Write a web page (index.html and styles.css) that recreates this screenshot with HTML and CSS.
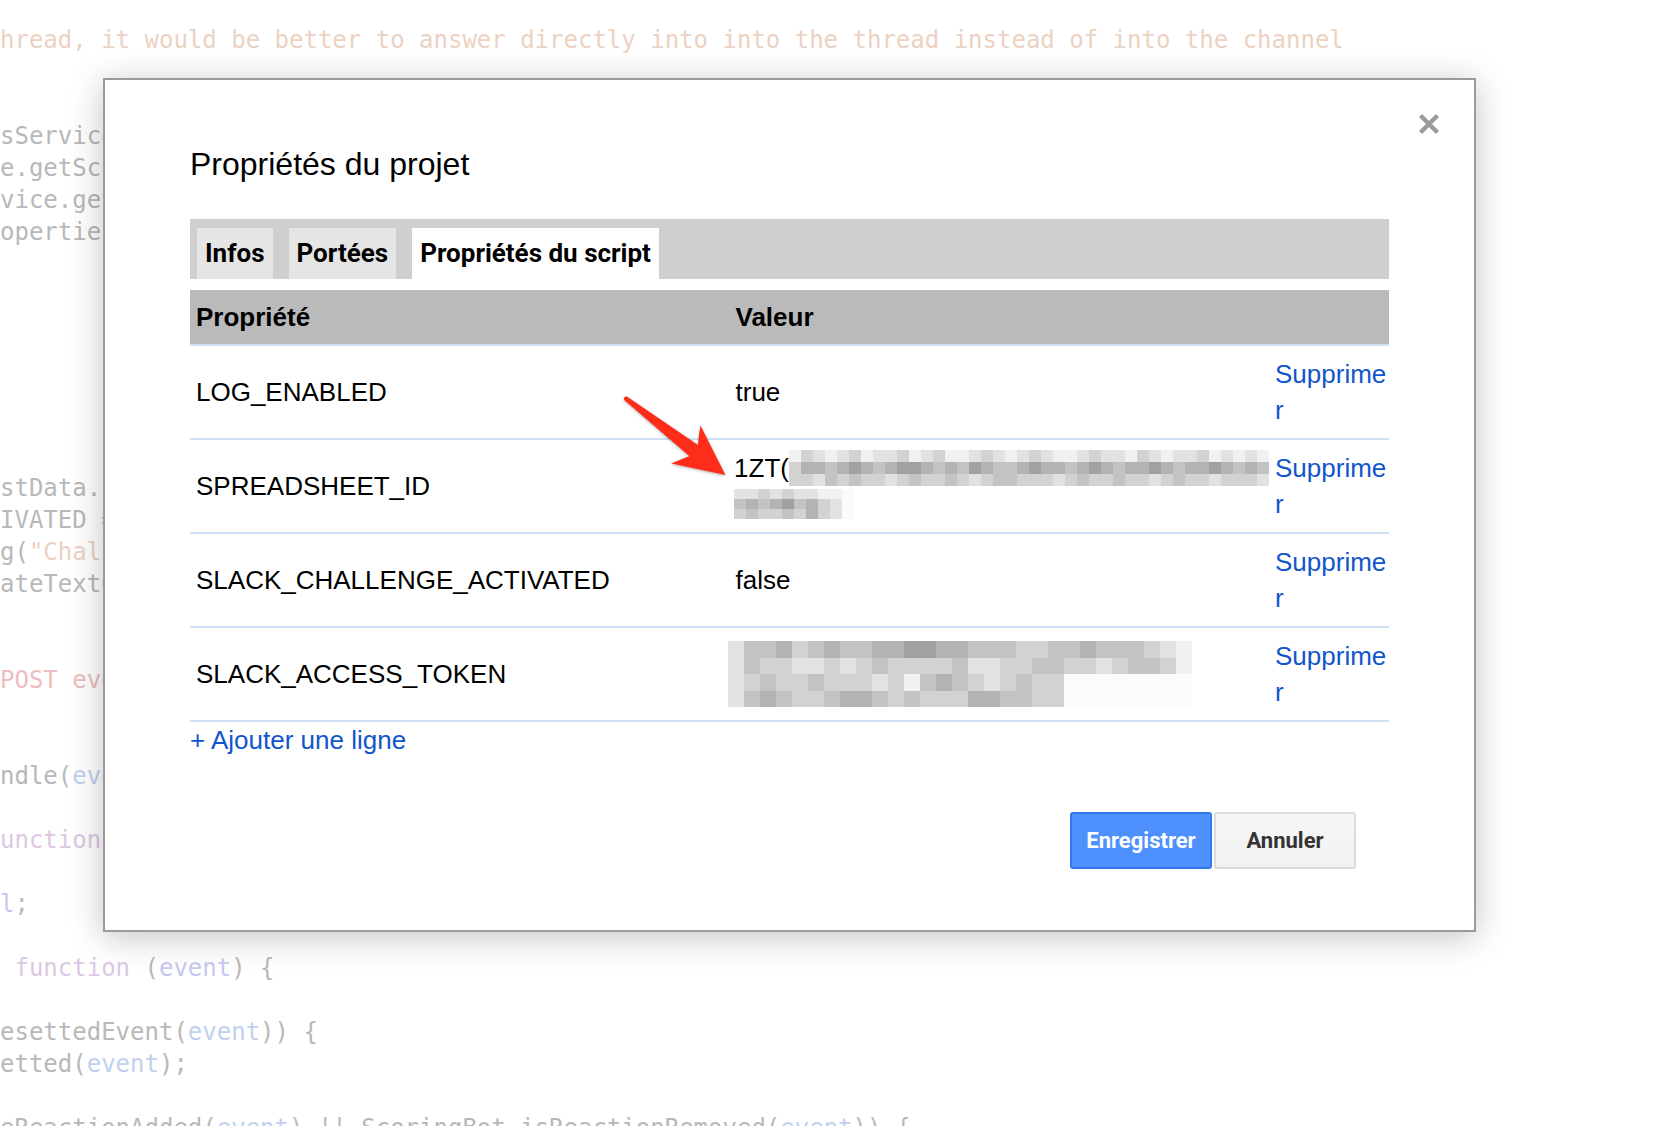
FILE: index.html
```html
<!DOCTYPE html>
<html lang="fr">
<head>
<meta charset="utf-8">
<title>Propriétés du projet</title>
<link rel="stylesheet" href="styles.css">
</head>
<body>
<div class="code">
<div class="ln pe">hread, it would be better to answer directly into into the thread instead of into the channel</div>
<div class="ln"></div>
<div class="ln"></div>
<div class="ln">sServices.getScriptProperties();</div>
<div class="ln">e.getScriptProperties();</div>
<div class="ln">vice.getProperty("LOG");</div>
<div class="ln">operties();</div>
<div class="ln"></div>
<div class="ln"></div>
<div class="ln"></div>
<div class="ln"></div>
<div class="ln"></div>
<div class="ln"></div>
<div class="ln"></div>
<div class="ln">stData.challenge;</div>
<div class="ln">IVATED = true;</div>
<div class="ln">g(<span class="pe">"Challenge"</span>);</div>
<div class="ln">ateTextOutput(challenge);</div>
<div class="ln"></div>
<div class="ln"></div>
<div class="ln"><span class="rd">POST event</span></div>
<div class="ln"></div>
<div class="ln"></div>
<div class="ln">ndle(<span class="bl">event</span>);</div>
<div class="ln"></div>
<div class="ln"><span class="kw">unction</span> (event) {</div>
<div class="ln"></div>
<div class="ln"><span class="vi">l</span>;</div>
<div class="ln"></div>
<div class="ln"> <span class="kw">function</span> (<span class="vi">event</span>) {</div>
<div class="ln"></div>
<div class="ln">esettedEvent(<span class="bl">event</span>)) {</div>
<div class="ln">etted(<span class="bl">event</span>);</div>
<div class="ln"></div>
<div class="ln">eReactionAdded(<span class="bl">event</span>) || ScoringBot.isReactionRemoved(<span class="bl">event</span>)) {</div>
</div>

<div class="dialog">
  <button class="close" aria-label="Fermer">
    <svg viewBox="0 0 22 22" width="22" height="22"><path d="M2.5 2.5 L19.5 19.5 M19.5 2.5 L2.5 19.5" stroke="#9c9c9c" stroke-width="4.5" fill="none"/></svg>
  </button>
  <h1 class="title">Propriétés du projet</h1>
  <div class="tabbar">
    <div class="tab">Infos</div>
    <div class="tab">Portées</div>
    <div class="tab active">Propriétés du script</div>
  </div>
  <div class="props">
    <div class="row head">
      <div class="cell">Propriété</div>
      <div class="cell">Valeur</div>
      <div class="cell"></div>
    </div>
    <div class="row">
      <div class="cell">LOG_ENABLED</div>
      <div class="cell">true</div>
      <div class="del"><a href="#">Supprimer</a></div>
    </div>
    <div class="row">
      <div class="cell">SPREADSHEET_ID</div>
      <div class="cell val">
        <div class="vline">1ZT(<span class="mz m1"><i class=a></i><i class=c></i><i class=b></i><i class=a></i><i class=b></i><i class=c></i><i class=a></i><i class=b></i><i class=b></i><i class=c></i><i class=a></i><i class=b></i><i class=c></i><i class=a></i><i class=a></i><i class=b></i><i class=c></i><i class=b></i><i class=a></i><i class=b></i><i class=c></i><i class=b></i><i class=a></i><i class=a></i><i class=b></i><i class=c></i><i class=b></i><i class=b></i><i class=a></i><i class=c></i><i class=b></i><i class=a></i><i class=b></i><i class=b></i><i class=c></i><i class=a></i><i class=b></i><i class=a></i><i class=b></i><i class=a></i><i class=c></i><i class=e></i><i class=e></i><i class=d></i><i class=e></i><i class=f></i><i class=e></i><i class=d></i><i class=e></i><i class=f></i><i class=f></i><i class=e></i><i class=d></i><i class=e></i><i class=d></i><i class=f></i><i class=e></i><i class=d></i><i class=d></i><i class=e></i><i class=f></i><i class=e></i><i class=e></i><i class=d></i><i class=e></i><i class=f></i><i class=e></i><i class=d></i><i class=e></i><i class=e></i><i class=f></i><i class=e></i><i class=d></i><i class=e></i><i class=e></i><i class=f></i><i class=e></i><i class=d></i><i class=e></i><i class=d></i><i class=c></i><i class=c></i><i class=b></i><i class=d></i><i class=c></i><i class=d></i><i class=c></i><i class=c></i><i class=b></i><i class=c></i><i class=d></i><i class=c></i><i class=c></i><i class=d></i><i class=c></i><i class=b></i><i class=c></i><i class=d></i><i class=d></i><i class=c></i><i class=c></i><i class=c></i><i class=b></i><i class=c></i><i class=d></i><i class=c></i><i class=c></i><i class=d></i><i class=c></i><i class=c></i><i class=b></i><i class=c></i><i class=d></i><i class=c></i><i class=c></i><i class=b></i><i class=c></i><i class=c></i><i class=c></i><i class=b></i></span></div>
        <div class="vline"><span class="mz m2"><i class=b></i><i class=b></i><i class=c></i><i class=b></i><i class=c></i><i class=b></i><i class=b></i><i class=a></i><i class=a></i><i class=w></i><i class=d></i><i class=e></i><i class=d></i><i class=e></i><i class=f></i><i class=d></i><i class=e></i><i class=c></i><i class=b></i><i class=w></i><i class=c></i><i class=d></i><i class=c></i><i class=c></i><i class=d></i><i class=c></i><i class=e></i><i class=c></i><i class=b></i><i class=w></i></span></div>
      </div>
      <div class="del"><a href="#">Supprimer</a></div>
    </div>
    <div class="row">
      <div class="cell">SLACK_CHALLENGE_ACTIVATED</div>
      <div class="cell">false</div>
      <div class="del"><a href="#">Supprimer</a></div>
    </div>
    <div class="row">
      <div class="cell">SLACK_ACCESS_TOKEN</div>
      <div class="cell"><span class="mz m3"><i class=b></i><i class=d></i><i class=d></i><i class=e></i><i class=c></i><i class=d></i><i class=e></i><i class=d></i><i class=d></i><i class=e></i><i class=e></i><i class=f></i><i class=f></i><i class=e></i><i class=e></i><i class=d></i><i class=d></i><i class=d></i><i class=c></i><i class=c></i><i class=d></i><i class=d></i><i class=e></i><i class=d></i><i class=d></i><i class=d></i><i class=c></i><i class=b></i><i class=a></i><i class=b></i><i class=d></i><i class=c></i><i class=c></i><i class=b></i><i class=b></i><i class=c></i><i class=b></i><i class=c></i><i class=d></i><i class=c></i><i class=c></i><i class=c></i><i class=c></i><i class=d></i><i class=b></i><i class=b></i><i class=c></i><i class=c></i><i class=d></i><i class=d></i><i class=c></i><i class=c></i><i class=b></i><i class=c></i><i class=d></i><i class=d></i><i class=c></i><i class=a></i><i class=b></i><i class=c></i><i class=d></i><i class=c></i><i class=c></i><i class=d></i><i class=c></i><i class=c></i><i class=c></i><i class=b></i><i class=c></i><i class=a></i><i class=d></i><i class=e></i><i class=d></i><i class=c></i><i class=b></i><i class=c></i><i class=d></i><i class=c></i><i class=c></i><i class=w></i><i class=w></i><i class=w></i><i class=w></i><i class=w></i><i class=w></i><i class=w></i><i class=w></i><i class=b></i><i class=d></i><i class=e></i><i class=d></i><i class=c></i><i class=c></i><i class=d></i><i class=e></i><i class=e></i><i class=d></i><i class=c></i><i class=d></i><i class=c></i><i class=c></i><i class=c></i><i class=e></i><i class=e></i><i class=d></i><i class=d></i><i class=c></i><i class=c></i><i class=w></i><i class=w></i><i class=w></i><i class=w></i><i class=w></i><i class=w></i><i class=w></i><i class=w></i></span></div>
      <div class="del"><a href="#">Supprimer</a></div>
    </div>
  </div>
  <a class="add" href="#">+ Ajouter une ligne</a>
  <div class="actions">
    <button class="btn primary">Enregistrer</button>
    <button class="btn">Annuler</button>
  </div>
</div>

<svg class="arrow" viewBox="0 0 140 120" width="140" height="120" aria-hidden="true">
  <g transform="translate(125.5 105) rotate(37.5)">
    <path d="M0 0 L-50 24 Q-44 13 -40 7 L-126 2.2 Q-129 0 -126 -2.2 L-40 -7 Q-44 -13 -50 -24 Z" fill="#fe2d1a"/>
  </g>
</svg>
</body>
</html>
```

FILE: styles.css
```css
* { box-sizing: border-box; }

html, body {
  margin: 0;
  height: 100%;
}

body {
  position: relative;
  overflow: hidden;
  background: #fff;
  font-family: "Liberation Sans", Arial, sans-serif;
  color: #000;
}

/* background code editor */
.code {
  padding-top: 24px;
  font-family: "DejaVu Sans Mono", "Liberation Mono", monospace;
  font-size: 24px;
  line-height: 32px;
  color: #b8b8b8;
}
.ln {
  height: 32px;
  white-space: pre;
}
.pe { color: #ebd2c2; }
.rd { color: #edbdbd; }
.kw { color: #dec6e5; }
.bl { color: #bfd1ee; }
.vi { color: #c6c8f2; }

/* dialog */
.dialog {
  position: absolute;
  left: 103px;
  top: 78px;
  width: 1373px;
  height: 854px;
  border: 2px solid #9b9b9b;
  background: #fff;
  box-shadow: 0 5px 32px rgba(0, 0, 0, 0.24);
  padding: 64px 85px 0;
  display: flex;
  flex-direction: column;
}

.close {
  position: absolute;
  top: 33px;
  right: 34px;
  width: 22px;
  height: 22px;
  padding: 0;
  border: 0;
  background: none;
  display: block;
}
.close svg { display: block; }

.title {
  margin: 0;
  font-size: 32px;
  line-height: 40px;
  font-weight: 400;
  color: #000;
}

.tabbar {
  margin-top: 35px;
  height: 60px;
  background: #cfcfcf;
  padding: 9px 7px 0;
  display: flex;
  gap: 16px;
}
.tab {
  height: 51px;
  line-height: 51px;
  padding: 0 8px;
  background: #e5e5e5;
  font-family: Roboto, "Liberation Sans", sans-serif;
  font-weight: 700;
  font-size: 26px;
  color: #000;
}
.tab.active { background: #fff; }

.props {
  margin-top: 11px;
  font-size: 26px;
}
.row {
  display: grid;
  grid-template-columns: 1fr 1fr 120px;
  border-bottom: 2px solid #cfe0f2;
}
.head {
  height: 56px;
  background: #bababa;
  font-weight: 700;
}
.cell {
  padding: 10px 0 10px 6px;
  line-height: 36px;
  display: flex;
  align-items: center;
}
.head .cell { padding: 0 0 0 6px; }
.del {
  padding: 10px 0 10px 6px;
  line-height: 36px;
  word-break: break-all;
}
.del a, .add {
  color: #1155cc;
  text-decoration: none;
}

.val {
  flex-direction: column;
  align-items: flex-start;
  justify-content: center;
}
.vline {
  display: flex;
  align-items: center;
  height: 36px;
}

/* pixelated redaction */
.mz { display: grid; }
.m1 { grid-template-columns: repeat(40, 12px); grid-auto-rows: 12px; }
.m2 { grid-template-columns: repeat(10, 12px); grid-auto-rows: 10px; }
.m3 { grid-template-columns: repeat(29, 16px); grid-auto-rows: 16.5px; margin-left: -8px; }
.mz i { display: block; }
.mz .a { background: #f1f1f1; }
.mz .b { background: #e2e2e2; }
.mz .c { background: #d2d2d2; }
.mz .d { background: #c3c3c3; }
.mz .e { background: #b3b3b3; }
.mz .f { background: #a1a1a1; }
.mz .w { background: #fbfbfb; }

.add {
  align-self: flex-start;
  font-size: 26px;
  line-height: 36px;
}

.actions {
  margin-top: 54px;
  display: flex;
  justify-content: flex-end;
  gap: 2px;
  padding-right: 33px;
}
.btn {
  min-width: 142px;
  height: 57px;
  padding: 0 14px;
  border: 2px solid #dcdcdc;
  border-radius: 3px;
  background: linear-gradient(#f6f6f6, #f1f1f1);
  font-family: Roboto, "Liberation Sans", sans-serif;
  font-weight: 700;
  font-size: 22px;
  color: #333;
}
.btn.primary {
  background: #4d90fe;
  border-color: #3079ed;
  color: #fff;
}

/* annotation arrow */
.arrow {
  position: absolute;
  left: 600px;
  top: 370px;
  width: 140px;
  height: 120px;
  overflow: visible;
  filter: drop-shadow(0 1px 1.5px rgba(0, 0, 0, 0.3));
}
```
